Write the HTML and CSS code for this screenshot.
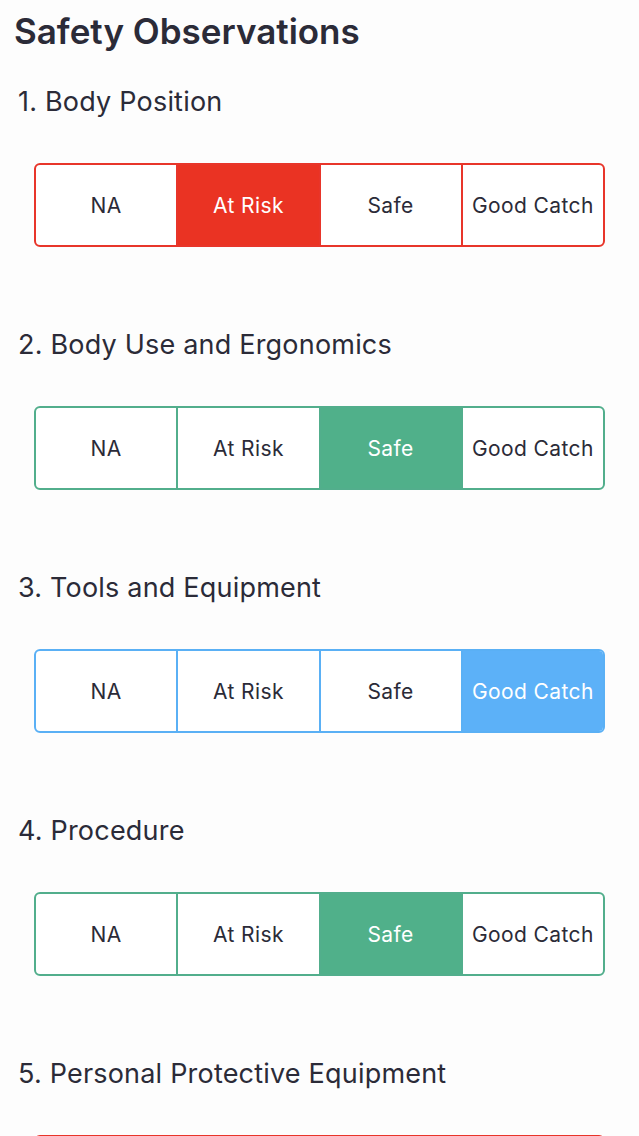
FILE: index.html
```html
<!DOCTYPE html>
<html lang="en">
<head>
  <meta charset="UTF-8">
  <meta name="viewport" content="width=device-width, initial-scale=1.0">
  <title>Safety Observations</title>
  <link rel="stylesheet" href="styles.css">
</head>
<body>
  <h1 class="title">Safety Observations</h1>

  <div class="question">
    <div class="label">1. Body Position</div>
    <div class="segments red">
      <div class="seg">NA</div>
      <div class="seg on">At Risk</div>
      <div class="seg">Safe</div>
      <div class="seg">Good Catch</div>
    </div>
  </div>

  <div class="question">
    <div class="label">2. Body Use and Ergonomics</div>
    <div class="segments green">
      <div class="seg">NA</div>
      <div class="seg">At Risk</div>
      <div class="seg on">Safe</div>
      <div class="seg">Good Catch</div>
    </div>
  </div>

  <div class="question">
    <div class="label">3. Tools and Equipment</div>
    <div class="segments blue">
      <div class="seg">NA</div>
      <div class="seg">At Risk</div>
      <div class="seg">Safe</div>
      <div class="seg on">Good Catch</div>
    </div>
  </div>

  <div class="question">
    <div class="label">4. Procedure</div>
    <div class="segments green">
      <div class="seg">NA</div>
      <div class="seg">At Risk</div>
      <div class="seg on">Safe</div>
      <div class="seg">Good Catch</div>
    </div>
  </div>

  <div class="question">
    <div class="label">5. Personal Protective Equipment</div>
    <div class="segments red">
      <div class="seg">NA</div>
      <div class="seg on">At Risk</div>
      <div class="seg">Safe</div>
      <div class="seg">Good Catch</div>
    </div>
  </div>
</body>
</html>
```

FILE: styles.css
```css
html, body {
  margin: 0;
  padding: 0;
  background: #fdfdfd;
  font-family: Inter, "Noto Sans", sans-serif;
  color: #2b2b38;
  overflow: hidden;
}
body {
  padding: 9px 0 0 0;
}
.title {
  margin: 0 0 29px 14px;
  font-size: 35px;
  line-height: 44px;
  font-weight: 600;
}
.question {
  padding-bottom: 78px;
}
.label {
  margin-left: 18px;
  font-size: 27px;
  line-height: 40px;
  font-weight: 400;
  letter-spacing: 0.2px;
}
.segments {
  display: flex;
  margin: 41px 0 0 34px;
  width: 571px;
  height: 84px;
  box-sizing: border-box;
  border: 2px solid var(--c);
  border-radius: 6px;
  overflow: hidden;
  background: #fff;
}
.seg {
  flex: 1;
  display: flex;
  align-items: center;
  justify-content: center;
  font-size: 21px;
  letter-spacing: 0.4px;
  border-left: 2px solid var(--c);
}
.seg:first-child {
  border-left: none;
}
.on {
  color: #fff;
  background: var(--fill);
}
.red { --c: #e8352a; --fill: #ea3323; }
.green { --c: #52ae8c; --fill: #50b08a; }
.blue { --c: #5ab0f5; --fill: #5cb1f8; }
```
